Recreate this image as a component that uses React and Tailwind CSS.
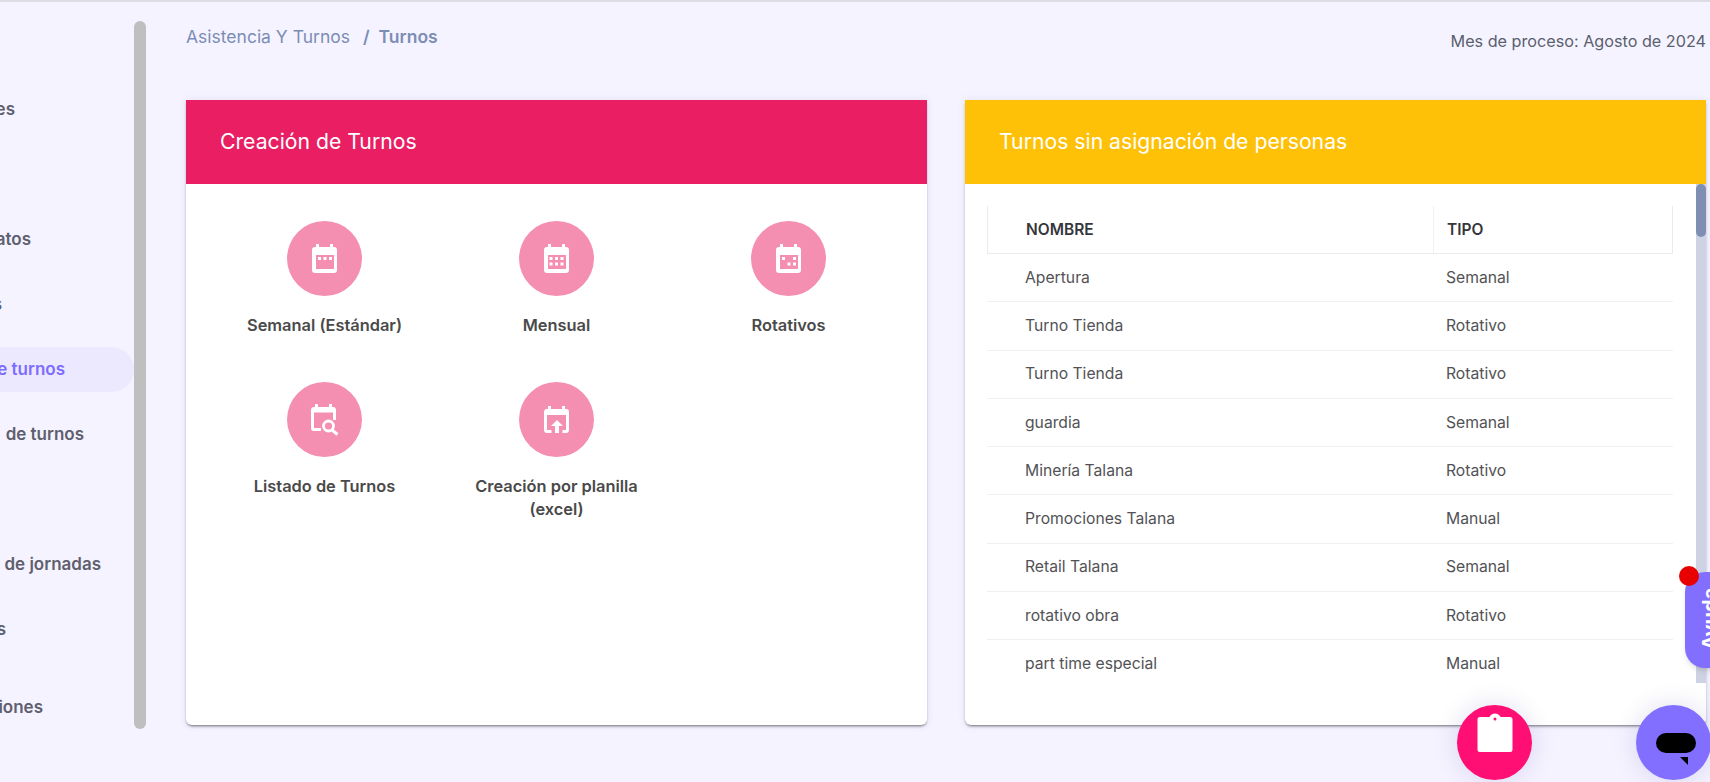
import React from 'react';

const menuItems = [
    { label: 'es', width: 'w-[15px]' },
    { label: '', width: 'w-[15px]' },
    { label: 'atos', width: 'w-[31px]' },
    { label: 's', width: 'w-[2px]' },
    { label: 'e turnos', width: 'w-[65px]', active: true },
    { label: 'de turnos', width: 'w-[84px]' },
    { label: '', width: 'w-[15px]' },
    { label: 'de jornadas', width: 'w-[101px]' },
    { label: 's', width: 'w-[6px]' },
];

const rows = [
    ['Apertura', 'Semanal'],
    ['Turno Tienda', 'Rotativo'],
    ['Turno Tienda', 'Rotativo'],
    ['guardia', 'Semanal'],
    ['Minería Talana', 'Rotativo'],
    ['Promociones Talana', 'Manual'],
    ['Retail Talana', 'Semanal'],
    ['rotativo obra', 'Rotativo'],
    ['part time especial', 'Manual'],
];

const calendarBody = 'M4 0h3v3h11V0h3v3h1a3 3 0 0 1 3 3v20a3 3 0 0 1-3 3H3a3 3 0 0 1-3-3V6a3 3 0 0 1 3-3h1z';
const hollow = 'M4 11v14h18V11z';

const CalendarIcon = ({ squares }) => (
    <svg width="26" height="30" viewBox="0 0 26 30" fill="white">
        <path fillRule="evenodd" d={calendarBody + hollow} />
        {squares.map(([x, y], i) => (
            <rect key={i} x={x} y={y} width="3" height="3" />
        ))}
    </svg>
);

const SearchCalendarIcon = () => (
    <svg width="28" height="32" viewBox="0 0 28 32" fill="none">
        <path fill="white" d="M4 0h3v3h11V0h3v3h1a3 3 0 0 1 3 3v10h-3V8.500H3V24h7v3H3a3 3 0 0 1-3-3V6a3 3 0 0 1 3-3h1z" />
        <circle cx="17.500" cy="22" r="5" stroke="white" strokeWidth="2.800" />
        <path d="M21 26l5.500 4.500" stroke="white" strokeWidth="3" />
    </svg>
);

const UploadCalendarIcon = () => (
    <svg width="26" height="28" viewBox="0 0 26 28" fill="white">
        <path d="M4 0h3v3h11V0h3v3h1a3 3 0 0 1 3 3v18a3 3 0 0 1-3 3h-3.500v-3H22V9H3v15h4.500v3H3a3 3 0 0 1-3-3V6a3 3 0 0 1 3-3h1z" />
        <path d="M13 14l6 6h-4v7h-4v-7H7z" />
    </svg>
);

const options = [
    { label: 'Semanal (Estándar)', icon: <CalendarIcon squares={[[6, 13], [11.500, 13], [17, 13]]} /> },
    { label: 'Mensual', icon: <CalendarIcon squares={[[5.500, 13], [11, 13], [16.500, 13], [5.500, 18.500], [11, 18.500], [16.500, 18.500]]} /> },
    { label: 'Rotativos', icon: <CalendarIcon squares={[[6, 13], [17, 13], [11.500, 18.500], [17, 18.500]]} /> },
    { label: 'Listado de Turnos', icon: <SearchCalendarIcon /> },
    { label: 'Creación por planilla (excel)', icon: <UploadCalendarIcon /> },
];

const cardShadow = 'shadow-[0_2px_3px_-1px_rgba(0,0,0,0.55),0_0_8px_rgba(90,80,160,0.1)]';

const App = () => {
    return (
        <div className="relative flex w-[1710px] h-[782px] overflow-hidden bg-[#f5f3ff] border-t-2 border-[#dcdce4] font-['Inter',sans-serif]">
            {/* sidebar */}
            <aside className="w-[134px] shrink-0 pt-[75px] overflow-hidden text-[17px] font-semibold text-[#5f5f6e]">
                {menuItems.map((item, i) => (
                    <div key={i} className="h-[65px] flex items-center">
                        {item.active ? (
                            <div className="w-full h-[45px] -mt-px flex items-center rounded-r-full bg-[#ece9fe] text-[#7d6cff]">
                                <span className={`${item.width} flex justify-end whitespace-nowrap pt-px`}>{item.label}</span>
                            </div>
                        ) : (
                            <span className={`${item.width} flex justify-end whitespace-nowrap`}>{item.label}</span>
                        )}
                    </div>
                ))}
                <div className="h-[65px] mt-[13px] flex items-center">
                    <span className="w-[43px] flex justify-end whitespace-nowrap">iones</span>
                </div>
            </aside>
            <div className="w-[12px] h-[708px] mt-[19px] shrink-0 rounded-full bg-[#bfbfbf]" />

            {/* content */}
            <main className="ml-[40px] w-[1520px] shrink-0">
                <div className="flex justify-between items-start h-[98px]">
                    <div className="mt-[25px] text-[17.500px] leading-5 text-[#7c8db5] whitespace-nowrap">
                        Asistencia Y Turnos
                        <span className="font-semibold ml-[13px] mr-[9px]">/</span>
                        <span className="font-semibold">Turnos</span>
                    </div>
                    <div className="mt-[29px] text-[16.200px] leading-5 text-[#5a5f6e]">Mes de proceso: Agosto de 2024</div>
                </div>

                <div className="flex gap-[38px]">
                    <section className={`w-[741px] h-[625px] bg-white rounded-b-md ${cardShadow}`}>
                        <header className="h-[84px] flex items-center pl-[34px] bg-[#e91e63] text-white text-[21.200px]">
                            Creación de Turnos
                        </header>
                        <div className="grid grid-cols-3 auto-rows-[161px] w-[696px] mx-auto pt-[37px]">
                            {options.map((opt) => (
                                <div key={opt.label} className="flex flex-col items-center">
                                    <div className="w-[75px] h-[75px] rounded-full bg-[#f48fb1] flex items-center justify-center">
                                        {opt.icon}
                                    </div>
                                    <div className="mt-[18px] w-[190px] text-center text-[16.400px] leading-[23px] font-semibold text-[#4a4a4a]">
                                        {opt.label}
                                    </div>
                                </div>
                            ))}
                        </div>
                    </section>

                    <section className={`w-[741px] h-[625px] bg-white rounded-b-md ${cardShadow}`}>
                        <header className="h-[84px] flex items-center pl-[34px] bg-[#ffc107] text-white text-[21.200px]">
                            Turnos sin asignación de personas
                        </header>
                        <div className="flex">
                            <div className="w-[686px] ml-[22px] pt-[22px]">
                                <div className="flex h-[48px] border-x border-b border-[#e9ebef] text-[15.500px] font-semibold text-[#36363c]">
                                    <div className="w-[446px] flex items-center pl-[38px] border-r border-[#eff0f3]">NOMBRE</div>
                                    <div className="flex items-center pl-[13px]">TIPO</div>
                                </div>
                                {rows.map((row, i) => (
                                    <div
                                        key={i}
                                        className={`flex h-[48.250px] items-center text-[15.700px] text-[#525256] ${i < rows.length - 1 ? 'border-b border-[#eef0f3]' : ''}`}
                                    >
                                        <div className="w-[446px] pl-[38px]">{row[0]}</div>
                                        <div className="pl-[13px]">{row[1]}</div>
                                    </div>
                                ))}
                            </div>
                            <div className="ml-[23px] w-[10px] h-[499px] bg-[#cdd3e2]">
                                <div className="h-[53px] rounded-full bg-[#7f8fb3]" />
                            </div>
                        </div>
                    </section>
                </div>
            </main>

            {/* floating buttons */}
            <div className="absolute left-[1685px] top-[570px] w-[60px] h-[96px] rounded-[20px] bg-[#836fff] shadow-md flex items-center">
                <span className="block -rotate-90 w-[60px] -ml-[5px] text-center text-[20px] leading-6 font-bold text-white">Ayuda</span>
            </div>
            <div className="absolute left-[1679px] top-[564px] w-5 h-5 rounded-full bg-[#e90000]" />
            <div className="absolute left-[1457px] top-[703px] w-[75px] h-[75px] pt-[8px] rounded-full bg-[#ff0f73] shadow-[0_0_24px_rgba(80,70,160,0.18)] flex items-start justify-center">
                <svg width="36" height="40" viewBox="0 0 36 40">
                    <path fill="white" d="M3 4h9.500a6 6 0 0 1 11 0H33a2.500 2.500 0 0 1 2.500 2.500v30a2.500 2.500 0 0 1-2.500 2.500H3a2.500 2.500 0 0 1-2.500-2.500v-30A2.500 2.500 0 0 1 3 4z" />
                    <circle cx="18" cy="6" r="1.500" fill="#ff0f73" />
                </svg>
            </div>
            <div className="absolute left-[1636px] top-[703px] w-[75px] h-[75px] rounded-full bg-[#836fff] shadow-[0_0_24px_rgba(80,70,160,0.18)]">
                <svg width="75" height="75" viewBox="0 0 75 75">
                    <rect x="20" y="28" width="40" height="20" rx="10" fill="black" />
                    <path d="M44 52h8v8z" fill="black" />
                </svg>
            </div>
        </div>
    );
};

export default App;
